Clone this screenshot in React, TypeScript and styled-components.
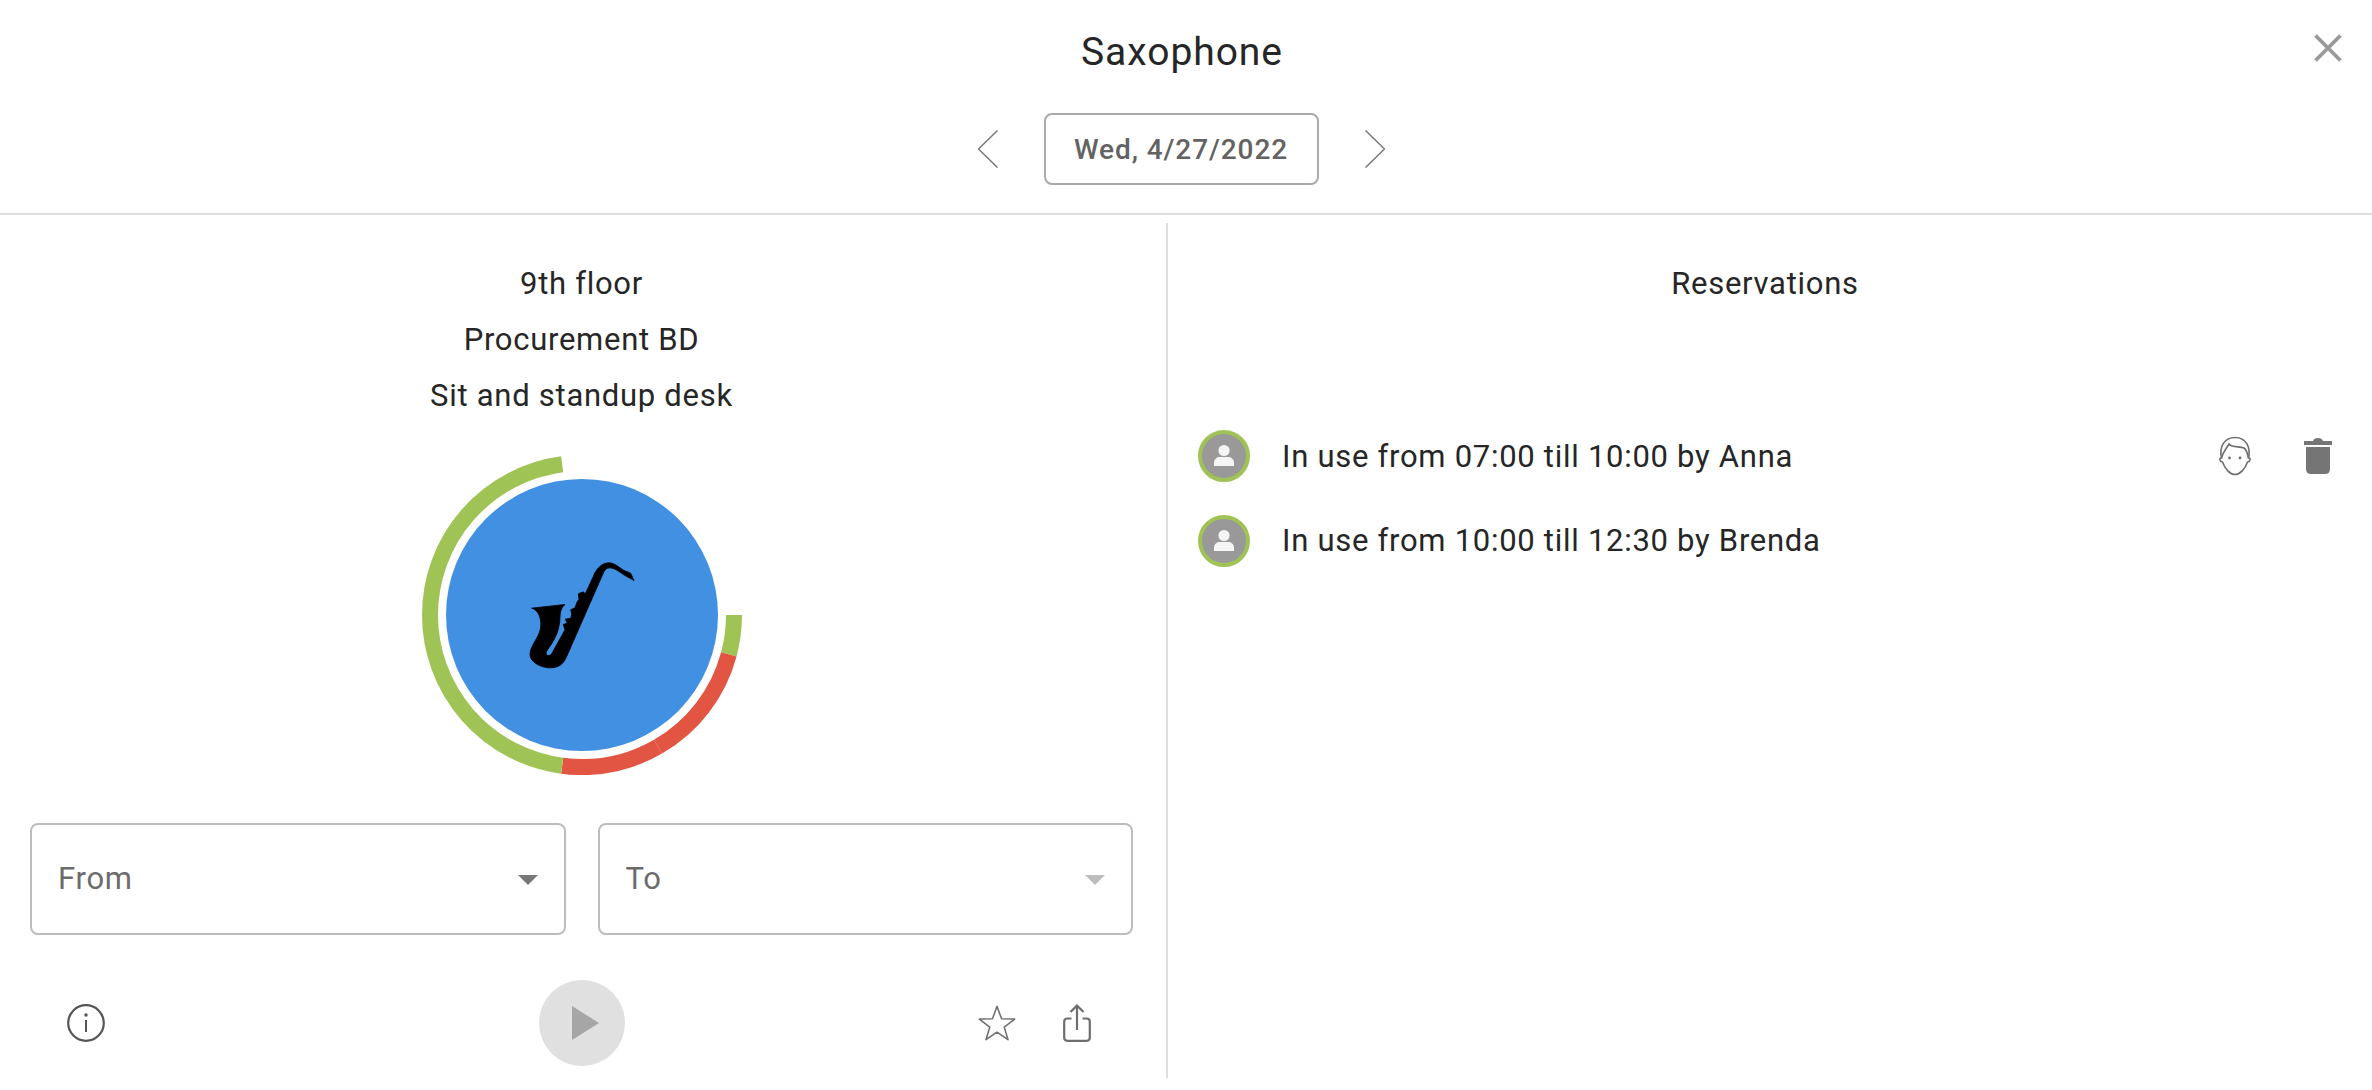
import React from 'react';
import styled, { createGlobalStyle } from 'styled-components';

const GlobalStyle = createGlobalStyle`
    html, body {
        margin: 0;
        padding: 0;
        background: #fff;
    }
    body {
        font-family: Roboto, "Liberation Sans", sans-serif;
        color: #262626;
    }
`;

const Page = styled.div`
    position: relative;
    width: 2372px;
    height: 1090px;
    overflow: hidden;
    background: #fff;
`;

const Header = styled.header`
    display: flex;
    flex-direction: column;
    align-items: center;
    height: 213px;
    padding-right: 10px;
    border-bottom: 2px solid #dedede;
`;

const Title = styled.h1`
    margin: 30px 0 0 2px;
    height: 44px;
    font-size: 39px;
    line-height: 44px;
    font-weight: 400;
    letter-spacing: 0.95px;
    color: #262626;
`;

const DateRow = styled.div`
    display: flex;
    align-items: center;
    gap: 46px;
    margin-top: 39px;
`;

const DateBox = styled.div`
    display: flex;
    align-items: center;
    justify-content: center;
    box-sizing: border-box;
    width: 275px;
    height: 72px;
    border: 2px solid #aaa;
    border-radius: 8px;
    font-size: 28px;
    font-weight: 500;
    letter-spacing: 0.9px;
    color: #636363;
`;

const CloseButton = styled.div`
    position: absolute;
    top: 34px;
    right: 30px;
    width: 28px;
    height: 28px;
`;

const Body = styled.main`
    display: flex;
    height: 855px;
    margin-top: 8px;
`;

const LeftPanel = styled.section`
    box-sizing: border-box;
    width: 1168px;
    padding: 32px 33px 0 30px;
    border-right: 2px solid #dedede;
`;

const RightPanel = styled.section`
    box-sizing: border-box;
    flex: 1;
    padding: 32px 10px 0 0;
`;

const InfoLine = styled.div`
    height: 56px;
    font-size: 31px;
    line-height: 57px;
    letter-spacing: 0.72px;
    text-align: center;
`;

const DialWrap = styled.div`
    display: flex;
    justify-content: center;
    margin-top: 32px;
`;

const Selects = styled.div`
    display: grid;
    grid-template-columns: 1fr 1fr;
    gap: 32px;
    margin-top: 48px;
`;

const SelectBox = styled.div`
    display: flex;
    align-items: center;
    justify-content: space-between;
    box-sizing: border-box;
    height: 112px;
    padding: 0 26px;
    padding-bottom: 2px;
    border: 2px solid #bdbdbd;
    border-radius: 8px;
    font-size: 31px;
    letter-spacing: 0.72px;
    color: #6b6b6b;
`;

const SelectArrow = styled.span<{ $disabled?: boolean }>`
    width: 0;
    height: 0;
    margin-top: 4px;
    border-left: 10px solid transparent;
    border-right: 10px solid transparent;
    border-top: 10px solid ${({ $disabled }) => ($disabled ? '#bdbdbd' : '#777')};
`;

const Actions = styled.div`
    display: grid;
    grid-template-columns: 1fr auto 1fr;
    align-items: center;
    margin-top: 45px;
`;

const ActionLeft = styled.div`
    display: flex;
    padding-left: 37px;
`;

const ActionRight = styled.div`
    display: flex;
    align-items: center;
    justify-content: flex-end;
    gap: 47px;
    padding-right: 42px;
`;

const PlayButton = styled.div`
    display: flex;
    align-items: center;
    justify-content: center;
    width: 86px;
    height: 86px;
    border-radius: 50%;
    background: #e0e0e0;
`;

const PlayTriangle = styled.span`
    width: 0;
    height: 0;
    margin-left: 7px;
    border-top: 17px solid transparent;
    border-bottom: 17px solid transparent;
    border-left: 27px solid #a6a6a6;
`;

const ReservationsTitle = styled(InfoLine)``;

const ReservationList = styled.ul`
    list-style: none;
    margin: 103px 0 0;
    padding: 0 0 0 30px;
`;

const ReservationRow = styled.li`
    display: flex;
    align-items: center;
    height: 84.5px;
`;

const Avatar = styled.div`
    display: flex;
    align-items: center;
    justify-content: center;
    box-sizing: border-box;
    flex: none;
    width: 52px;
    height: 52px;
    border: 4px solid #a0c355;
    border-radius: 50%;
    background: #999;
`;

const ReservationText = styled.div`
    flex: 1;
    margin-left: 32px;
    font-size: 31px;
    letter-spacing: 0.72px;
`;

const RowIcons = styled.div`
    display: flex;
    align-items: center;
    gap: 52px;
    margin-right: 30px;
`;

const START_ANGLE = 90;
const CENTER = 160;
const RADIUS = 152;

const polar = (deg: number) => {
    const rad = ((deg - 90) * Math.PI) / 180;
    return `${CENTER + RADIUS * Math.cos(rad)} ${CENTER + RADIUS * Math.sin(rad)}`;
};

const arc = (from: number, to: number) =>
    `M ${polar(from)} A ${RADIUS} ${RADIUS} 0 ${to - from > 180 ? 1 : 0} 1 ${polar(to)}`;

// 15 degrees per hour, 6:00 sits at three o'clock
const slots = [
    { from: START_ANGLE, to: 105, color: '#a0c355' },
    { from: 105, to: 150, color: '#e25542' },
    { from: 150, to: 187.5, color: '#e25542' },
    { from: 187.5, to: 352.5, color: '#a0c355' },
];

const SAX_PATH =
    'M65 173 L165 162 C156 170 151 178 150 200 C149 235 138 262 118 290 C112 298 106 306 109 312 C113 317 121 316 125 310 L165 238 L160 222 L172 218 L166 206 L183 203 L185 190 L182 178 L195 172 L201 155 L207 146 L205 130 L220 124 L226 130 L250 78 C256 60 272 38 296 37 C314 37 328 52 342 60 L362 68 L372 90 L345 75 C330 66 316 53 300 52 C291 52 285 57 281 65 L170 318 C160 342 145 352 120 352 C98 352 70 340 62 322 C56 305 66 288 76 270 C88 250 96 232 91 207 C87 188 80 178 65 173 Z';

const Dial = () => (
    <svg width={320} height={320} viewBox="0 0 320 320">
        <circle cx={CENTER} cy={CENTER} r={136} fill="#4190e2" />
        {slots.map((s) => (
            <path key={s.from} d={arc(s.from, s.to)} fill="none" stroke={s.color} strokeWidth={16} />
        ))}
        <g transform="translate(88 95.5) scale(0.3333)">
            <path d={SAX_PATH} fill="#000" stroke="#000" strokeWidth={2.5} strokeLinejoin="round" />
        </g>
    </svg>
);

const Chevron = ({ right }: { right?: boolean }) => (
    <svg width={20} height={38} viewBox="0 0 20 38">
        <path d={right ? 'M0.5 0.5 L19.5 19 L0.5 37.5' : 'M19.5 0.5 L0.5 19 L19.5 37.5'} fill="none" stroke="#777" strokeWidth={1.5} />
    </svg>
);

const CloseIcon = () => (
    <svg width={28} height={28} viewBox="0 0 28 28">
        <path d="M1.5 1.5 L26.5 26.5 M26.5 1.5 L1.5 26.5" stroke="#9a9a9a" strokeWidth={3.8} />
    </svg>
);

const InfoIcon = () => (
    <svg width={38} height={38} viewBox="0 0 38 38">
        <circle cx={19} cy={19} r={17.8} fill="none" stroke="#555" strokeWidth={2.2} />
        <circle cx={19} cy={11} r={1.7} fill="#555" />
        <path d="M19 16 V28" stroke="#555" strokeWidth={2} />
    </svg>
);

const StarIcon = () => (
    <svg width={38} height={38} viewBox="0 0 40 38">
        <path
            d="M20 1.5 L24.8 14.6 L38.6 14.9 L27.6 23.3 L31.6 36.6 L20 28.7 L8.4 36.6 L12.4 23.3 L1.4 14.9 L15.2 14.6 Z"
            fill="none"
            stroke="#6e6e6e"
            strokeWidth={1.6}
            strokeLinejoin="round"
        />
    </svg>
);

const ShareIcon = () => (
    <svg width={28} height={38} viewBox="0 0 28 38">
        <path d="M8.5 14.5 H4.5 Q1.2 14.5 1.2 17.5 V33.5 Q1.2 36.8 4.5 36.8 H23.5 Q26.8 36.8 26.8 33.5 V17.5 Q26.8 14.5 23.5 14.5 H19.5" fill="none" stroke="#6e6e6e" strokeWidth={2.2} />
        <path d="M14 1.5 V26 M7.5 8 L14 1.5 L20.5 8" fill="none" stroke="#6e6e6e" strokeWidth={2.2} />
    </svg>
);

const PersonIcon = () => (
    <svg width={24} height={24} viewBox="0 0 24 24">
        <circle cx={12} cy={6.5} r={5.6} fill="#f5f5f5" />
        <path d="M2 22 V18.5 C2 15 5 13 8 13 H16 C19 13 22 15 22 18.5 V22 Z" fill="#f5f5f5" />
    </svg>
);

const FaceIcon = () => (
    <svg width={34} height={40} viewBox="0 0 34 40">
        <path
            d="M3.5 22 C1 11 6 1.5 17 1.5 C28 1.5 33 11 30.5 22 C31.5 22 32.5 22.5 32 24 C31.5 25.5 30.5 26 29.5 26 C27 33 22 38.5 17 38.5 C12 38.5 7 33 4.5 26 C3.5 26 2.5 25.5 2 24 C1.5 22.5 2.5 22 3.5 22 Z"
            fill="none"
            stroke="#6e6e6e"
            strokeWidth={1.6}
        />
        <path d="M3.5 22 C5 16 8 13 11 8 C14 12 22 10 26 12 C29 14 29 17 30.5 22" fill="none" stroke="#6e6e6e" strokeWidth={1.6} />
        <circle cx={11.5} cy={22} r={1.4} fill="#6e6e6e" />
        <circle cx={22} cy={22} r={1.4} fill="#6e6e6e" />
    </svg>
);

const TrashIcon = () => (
    <svg width={28} height={36} viewBox="0 0 28 36">
        <path d="M0 3 H9 Q10 0 14 0 Q18 0 19 3 H28 V7 H0 Z" fill="#757575" />
        <path d="M2 9 H26 V31 Q26 36 21 36 H7 Q2 36 2 31 Z" fill="#757575" />
    </svg>
);

const App = () => {
    return (
        <Page>
            <GlobalStyle />
            <Header>
                <Title>Saxophone</Title>
                <DateRow>
                    <Chevron />
                    <DateBox>Wed, 4/27/2022</DateBox>
                    <Chevron right />
                </DateRow>
            </Header>
            <CloseButton>
                <CloseIcon />
            </CloseButton>
            <Body>
                <LeftPanel>
                    <InfoLine>9th floor</InfoLine>
                    <InfoLine>Procurement BD</InfoLine>
                    <InfoLine>Sit and standup desk</InfoLine>
                    <DialWrap>
                        <Dial />
                    </DialWrap>
                    <Selects>
                        <SelectBox>
                            From
                            <SelectArrow />
                        </SelectBox>
                        <SelectBox>
                            To
                            <SelectArrow $disabled />
                        </SelectBox>
                    </Selects>
                    <Actions>
                        <ActionLeft>
                            <InfoIcon />
                        </ActionLeft>
                        <PlayButton>
                            <PlayTriangle />
                        </PlayButton>
                        <ActionRight>
                            <StarIcon />
                            <ShareIcon />
                        </ActionRight>
                    </Actions>
                </LeftPanel>
                <RightPanel>
                    <ReservationsTitle>Reservations</ReservationsTitle>
                    <ReservationList>
                        <ReservationRow>
                            <Avatar>
                                <PersonIcon />
                            </Avatar>
                            <ReservationText>In use from 07:00 till 10:00 by Anna</ReservationText>
                            <RowIcons>
                                <FaceIcon />
                                <TrashIcon />
                            </RowIcons>
                        </ReservationRow>
                        <ReservationRow>
                            <Avatar>
                                <PersonIcon />
                            </Avatar>
                            <ReservationText>In use from 10:00 till 12:30 by Brenda</ReservationText>
                        </ReservationRow>
                    </ReservationList>
                </RightPanel>
            </Body>
        </Page>
    );
};

export default App;
